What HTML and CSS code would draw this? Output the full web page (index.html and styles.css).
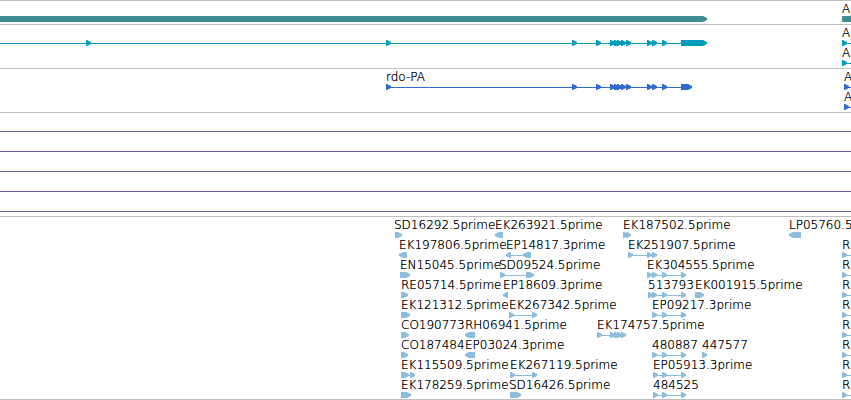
FILE: index.html
```html
<!DOCTYPE html>
<html lang="en">
<head>
<meta charset="utf-8">
<title>Genome browser</title>
<link rel="stylesheet" href="styles.css">
</head>
<body>
<main class="browser">
  <section class="track gene" aria-label="Genes" id="genes"></section>
  <section class="track transcript" aria-label="Transcripts" id="transcripts"></section>
  <section class="track protein" aria-label="Coding sequences" id="proteins"></section>
  <section class="track plots" aria-label="Expression">
    <div class="plot"></div>
    <div class="plot"></div>
    <div class="plot"></div>
    <div class="plot"></div>
    <div class="plot"></div>
  </section>
  <section class="track est" aria-label="ESTs" id="ests"></section>
</main>
<script src="tracks.js"></script>
</body>
</html>
```
FILE: styles.css
```css
body {
  margin: 0;
  background: #fff;
  color: #000;
  font: 200 12px/14px "DejaVu Sans", "DejaVu Sans Light", sans-serif;
}
.browser {
  overflow: hidden;
}
.track {
  border-top: 1px solid #bebebe;
}
.track:last-child {
  border-bottom: 1px solid #bebebe;
}
.row {
  position: relative;
  height: 20px;
}
.gene {
  color: #408c94;
  padding-bottom: 3px;
}
.transcript {
  color: #009cba;
  padding-bottom: 3px;
}
.protein {
  color: #316ace;
  padding-bottom: 3px;
}
.est {
  color: #8cbdde;
  padding-bottom: 2px;
}
.label {
  position: absolute;
  top: 1px;
  color: #000;
  text-shadow: 0 0 0 #000;
  white-space: nowrap;
}
.glyphs {
  display: block;
  position: absolute;
  top: 15px;
  left: 0;
  width: 100%;
  height: 6px;
  overflow: visible;
  fill: currentColor;
}
.plots {
  padding-bottom: 4px;
}
.plot {
  height: 19px;
  border-bottom: 1px solid #7355a5;
}
.plot:first-child {
  height: 18px;
}
```
FILE: tracks.js
```js
// Each row lists features: [label, label x, spans, reverse strand]
// where spans are [start, end] exon extents joined by an intron line.
const exons = [[386, 391], [572, 577], [596, 601], [610, 615], [614, 619], [617, 622], [621, 626], [626, 631], [647, 652], [652, 657], [662, 667]];

const tracks = {
  genes: [
    [["", 0, [[-20, 707]]], ["A", 842, [[842, 900]]]]
  ],
  transcripts: [
    [["", 0, [[-20, -10], [86, 91], ...exons, [681, 707]]], ["A", 842, [[842, 847], [880, 900]]]],
    [["A", 842, [[842, 847], [880, 900]]]]
  ],
  proteins: [
    [["rdo-PA", 386, [...exons, [681, 692]]], ["A", 844, [[844, 849], [880, 900]]]],
    [["A", 844, [[844, 849], [880, 900]]]]
  ],
  ests: [
    [["SD16292.5prime", 394, [[395, 402]]], ["EK263921.5prime", 495, [[495, 503]], true], ["EK187502.5prime", 623, [[623, 628], [626, 631]]], ["LP05760.5prime", 789, [[789, 801]], true]],
    [["EK197806.5prime", 399, [[399, 407]], true], ["EP14817.3prime", 506, [[506, 511], [523, 531]], true], ["EK251907.5prime", 628, [[628, 633], [647, 652], [652, 657]]], ["R", 842, [[842, 847], [880, 900]]]],
    [["EN15045.5prime", 400, [[400, 410]]], ["SD09524.5prime", 499, [[500, 505], [526, 534]]], ["EK304555.5prime", 647, [[647, 652], [652, 657], [662, 667], [681, 686]]], ["R", 842, [[842, 847], [880, 900]]]],
    [["RE05714.5prime", 401, [[401, 408]]], ["EP18609.3prime", 503, [[503, 508]], true], ["513793", 648, [[648, 653], [652, 657], [662, 667], [681, 686]]], ["EK001915.5prime", 695, [[695, 704]]], ["R", 842, [[842, 847], [880, 900]]]],
    [["EK121312.5prime", 401, [[401, 410]]], ["EK267342.5prime", 509, [[509, 514], [532, 537]]], ["EP09217.3prime", 652, [[652, 657], [662, 667], [681, 686]]], ["R", 842, [[842, 847], [880, 900]]]],
    [["CO190773", 401, [[401, 409]]], ["RH06941.5prime", 465, [[465, 475]], true], ["EK174757.5prime", 597, [[597, 602], [610, 615], [614, 619], [617, 622], [621, 626]]], ["R", 842, [[842, 847], [880, 900]]]],
    [["CO187484", 401, [[401, 408]]], ["EP03024.3prime", 465, [[465, 475]], true], ["480887", 652, [[652, 657], [662, 667], [681, 686]]], ["447577", 702, [[702, 707]]], ["R", 842, [[842, 847], [880, 900]]]],
    [["EK115509.5prime", 401, [[401, 409], [410, 415]]], ["EK267119.5prime", 510, [[510, 515], [532, 537]]], ["EP05913.3prime", 653, [[653, 658], [662, 667], [681, 686]]], ["R", 842, [[842, 847], [880, 900]]]],
    [["EK178259.5prime", 401, [[401, 411]]], ["SD16426.5prime", 509, [[510, 521]]], ["484525", 653, [[653, 658], [662, 667], [681, 686]]], ["R", 842, [[842, 847], [880, 900]]]]
  ]
};

function exonPath([start, end], reverse) {
  const tip = reverse ? start : end;
  const base = reverse ? end : start;
  const dir = reverse ? -1 : 1;
  const at = back => tip - dir * back;
  return `M${base} 0H${at(4)}L${tip} 2V4L${at(4)} 6H${base}Z`;
}

function glyphs(features) {
  let shapes = "";
  for (const [, , spans, reverse] of features) {
    const first = spans[0][0];
    const last = spans[spans.length - 1][1];
    if (spans.length > 1) {
      shapes += `<rect x="${first}" y="3" width="${last - first}" height="1"/>`;
    }
    shapes += `<path d="${spans.map(span => exonPath(span, reverse)).join("")}"/>`;
  }
  return `<svg class="glyphs" aria-hidden="true">${shapes}</svg>`;
}

for (const [id, rows] of Object.entries(tracks)) {
  document.getElementById(id).innerHTML = rows.map(features =>
    `<div class="row">${glyphs(features)}${features.filter(f => f[0]).map(([name, x]) =>
      `<span class="label" style="left:${x}px">${name}</span>`).join("")}</div>`
  ).join("");
}
```
